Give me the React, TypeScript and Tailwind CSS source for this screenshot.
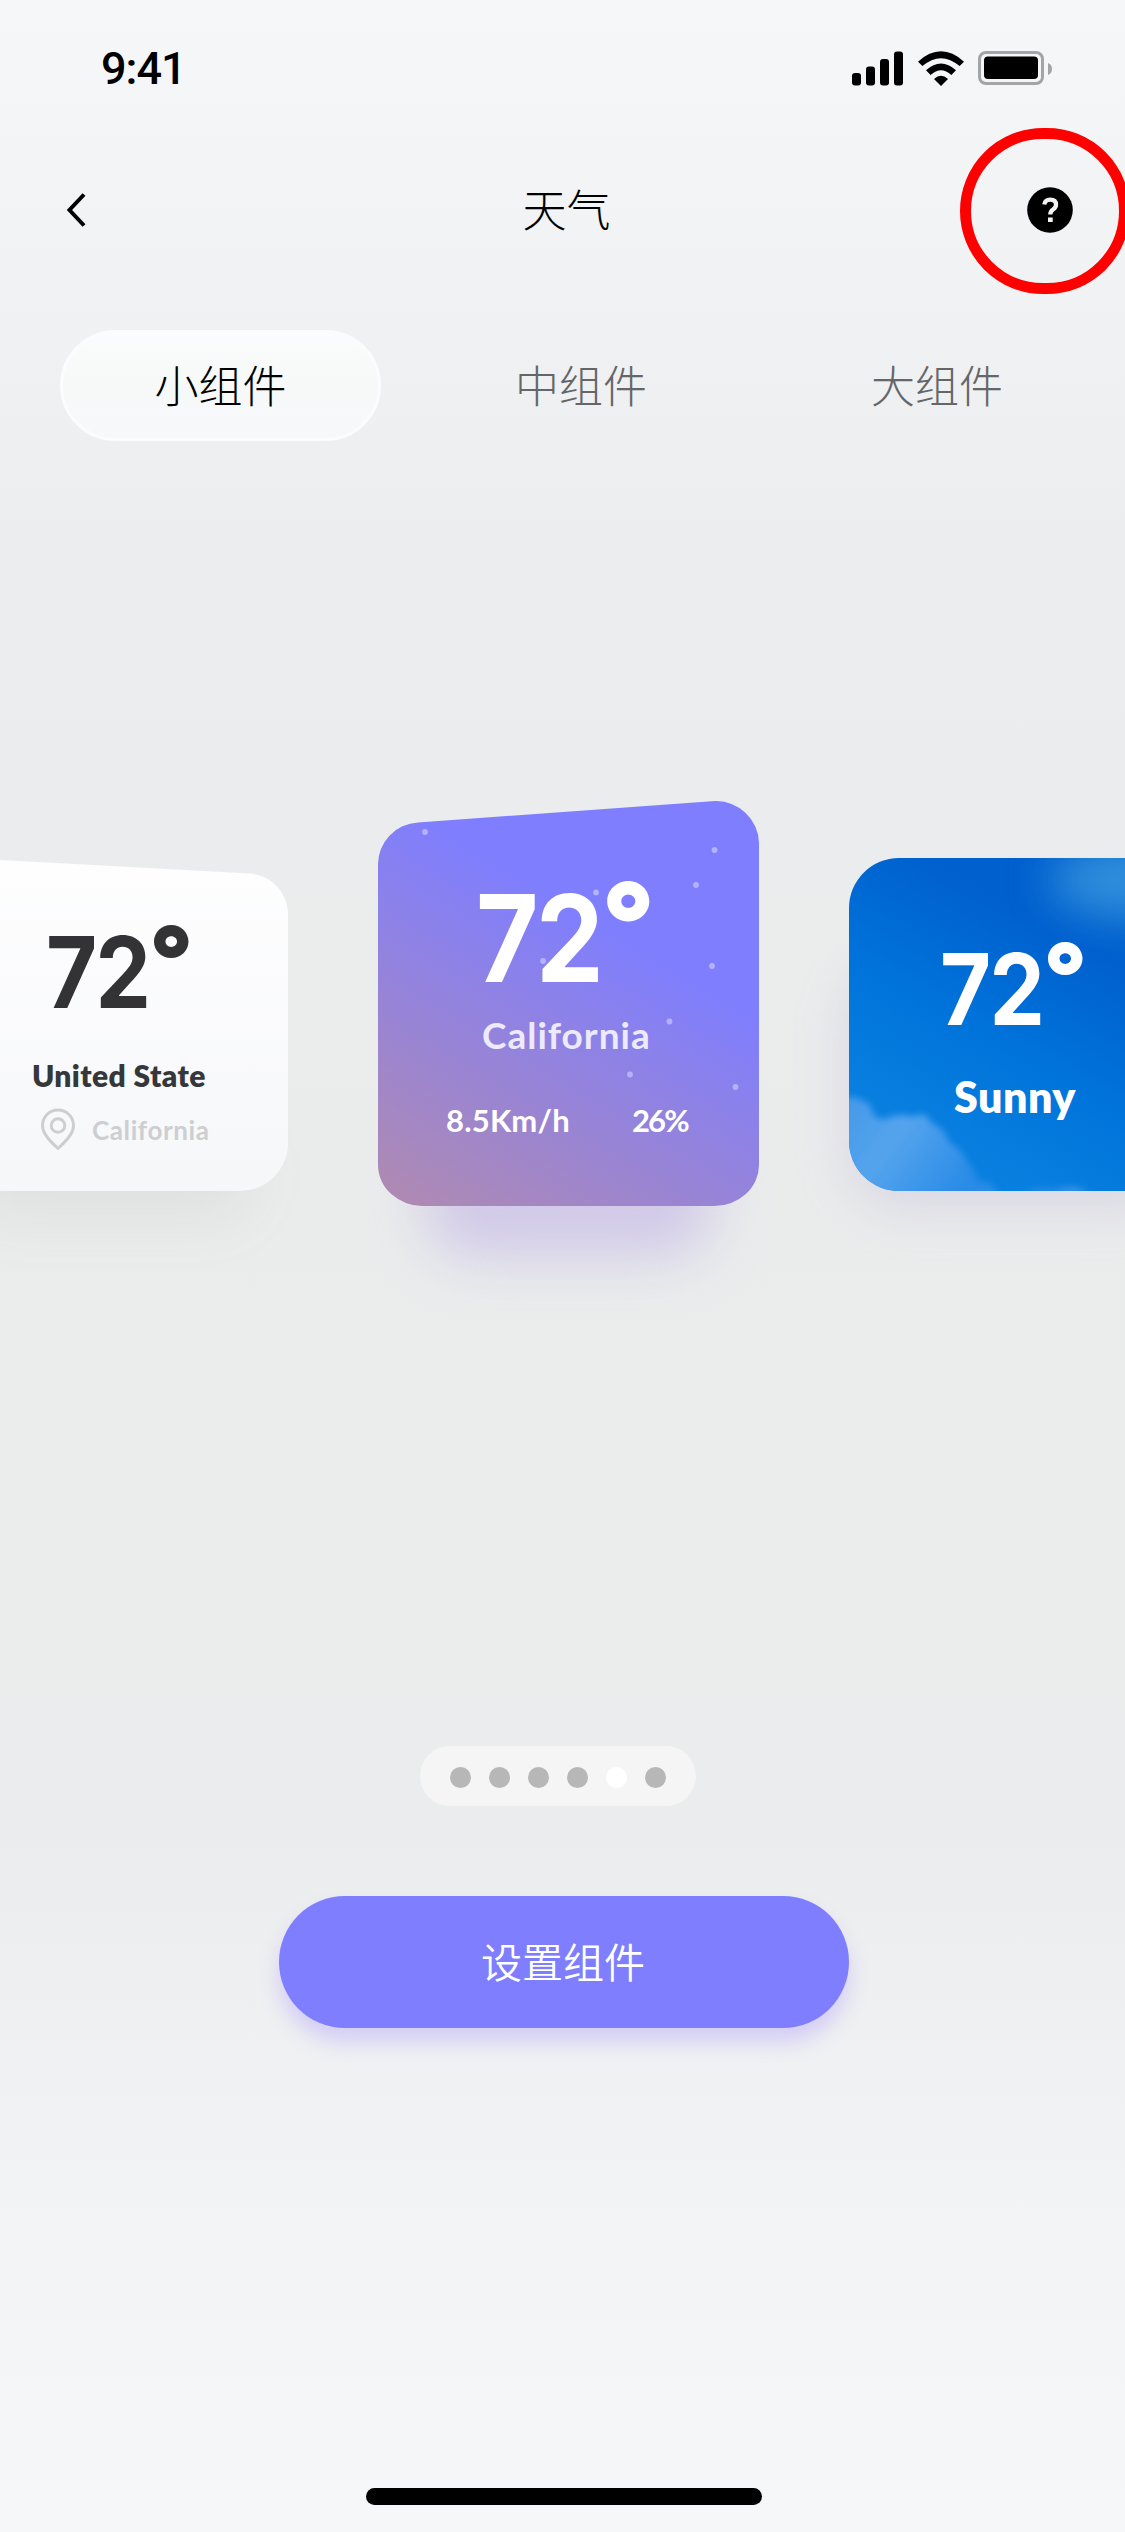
import React from "react";

const CJK = "font-['Noto_Sans_CJK_SC',sans-serif] font-light";

function StatusBar() {
  return (
    <div className="flex h-[137px] shrink-0 items-center justify-between pl-[101px] pr-[72px]">
      <span className="font-['Roboto',sans-serif] text-[45px] font-medium leading-none tracking-[-1px] text-black">
        9:41
      </span>
      <svg width="202" height="36" viewBox="0 0 202 36" className="block">
        <rect x="1" y="22" width="9" height="12.5" rx="3" />
        <rect x="15" y="15.500" width="9" height="19" rx="3" />
        <rect x="29" y="8" width="9" height="26.500" rx="3" />
        <rect x="43" y="0.500" width="9" height="34" rx="3" />
        <path d="M67 10.700Q90 -10 113 10.700L108.600 15.100Q90 -.8 71.400 15.100Z" />
        <path d="M75 19.200Q90 5.700 105 19.200L100.400 24Q90 14.600 79.600 24Z" />
        <path d="M83 28Q90 21.600 97 28L90 35Z" />
        <rect x="128.500" y="1.500" width="63" height="31" rx="6.500" fill="none" stroke="#a3a4a6" strokeWidth="3" />
        <rect x="133" y="5.500" width="54" height="22.500" rx="4" />
        <path d="M197 12Q201 13.500 201 18T197 24Z" fill="#a3a4a6" />
      </svg>
    </div>
  );
}

function Header() {
  return (
    <header className="relative flex h-[146px] shrink-0 items-center justify-between pl-[64px] pr-[52px]">
      <svg width="46" height="34" viewBox="0 0 46 34" fill="none" stroke="#000" strokeWidth="4">
        <path d="M20 1.500L5.500 17L20 32.500" />
      </svg>
      <h1 className={`${CJK} mb-[5px] mr-[4px] text-[44px] leading-none text-black`}>天气</h1>
      <svg width="46" height="46" viewBox="0 0 46 46">
        <circle cx="23" cy="23" r="22.800" />
        <path d="M17.300 17.500Q18 12.700 23.200 12.700Q29 12.700 29 17.700Q29 20.500 26 22.500Q23.300 24.300 23.300 27.500" fill="none" stroke="#f2f3f5" strokeWidth="4.300" />
        <rect x="21" y="30.500" width="4.700" height="4.500" fill="#f2f3f5" />
      </svg>
      <div className="absolute left-[960px] top-[-9px] h-[166px] w-[170px] rounded-full border-[11px] border-[#ff0000]" />
    </header>
  );
}

function Tabs() {
  return (
    <nav className={`${CJK} mt-[47px] flex h-[111px] shrink-0 items-center gap-[36px] pl-[60px] text-[44px] leading-none`}>
      <div className="flex h-[111px] w-[321px] items-center justify-center rounded-full border-[3px] border-[#fbfcfd] bg-gradient-to-b from-[#fbfcfd] via-[#f6f9f8] to-[#f7f8fb] pb-[4px] text-black">
        小组件
      </div>
      <div className="flex w-[328px] justify-center pb-[4px] text-[#656668]">中组件</div>
      <div className="flex w-[312px] justify-center pb-[4px] text-[#656668]">大组件</div>
    </nav>
  );
}

type TemperatureProps = { className: string; large?: boolean };

function Temperature({ className, large }: TemperatureProps) {
  return (
    <div className={`flex origin-left scale-x-[0.89] items-start font-['Inter',sans-serif] font-bold ${className}`}>
      <span className={large ? "text-[121px] leading-[88px] tracking-[-3px]" : "text-[99px] leading-[72px] tracking-[-2px]"}>72</span>
      <span className={large ? "-mt-[17px] origin-left scale-x-[1.16] text-[112px] font-black leading-[90px]" : "-mt-[14px] origin-left scale-x-[1.16] text-[92px] font-black leading-[74px]"}>°</span>
    </div>
  );
}

function WhiteCard() {
  return (
    <article className="relative mt-[57px] h-[333px] w-[336px] shrink-0">
      <div className="absolute bottom-[-28px] left-[20px] right-[34px] h-[90px] rounded-[50px] bg-[#85868c]/10 blur-[26px]" />
      <svg className="absolute inset-0" width="336" height="333" viewBox="0 0 336 333">
        <defs>
          <linearGradient id="white" x1="0" y1="0" x2="0" y2="1">
            <stop offset="0" stopColor="#fefeff" />
            <stop offset="1" stopColor="#f6f7f9" />
          </linearGradient>
        </defs>
        <path d="M48 2L298 15.500A41 41 0 0 1 336 58V285A48 48 0 0 1 288 333H0V0Z" fill="url(#white)" />
      </svg>
      <div className="relative flex flex-col">
        <Temperature className="ml-[94px] mt-[78px] h-[72px] text-[#333335]" />
        <div className="ml-[80px] mt-[52px] font-['Lato',sans-serif] text-[30px] font-extrabold leading-[30px] tracking-[0.4px] text-[#36373a]">
          United State
        </div>
        <div className="ml-[88px] mt-[18px] flex items-center">
          <svg width="36" height="43" viewBox="0 0 36 43" fill="none" stroke="#cdced0" strokeWidth="3">
            <path d="M18 40.500C11 34 2.500 26 2.500 17.500a15.500 15.500 0 0 1 31 0C33.500 26 25 34 18 40.500Z" strokeLinejoin="round" />
            <circle cx="18" cy="17.500" r="6.800" />
          </svg>
          <span className="ml-[16px] font-['Lato',sans-serif] text-[26px] font-bold leading-none tracking-[0.6px] text-[#cdced0]">California</span>
        </div>
      </div>
    </article>
  );
}

const STARS = [
  [47, 31], [336.5, 49], [318, 84], [218, 91.5], [165, 160],
  [334, 165], [291.5, 220.5], [252, 273.5], [357.5, 286],
];

function PurpleCard() {
  return (
    <article className="relative h-[405px] w-[381px] shrink-0">
      <div className="absolute bottom-[-50px] left-[46px] right-[46px] h-[110px] rounded-[50px] bg-[#9a80e0]/32 blur-[28px]" />
      <svg className="absolute inset-0" width="381" height="405" viewBox="0 0 381 405">
        <defs>
          <linearGradient id="purple" gradientUnits="userSpaceOnUse" x1="30" y1="420" x2="215" y2="110">
            <stop offset="0" stopColor="#b08ab0" />
            <stop offset="1" stopColor="#7e7eff" />
          </linearGradient>
        </defs>
        <path d="M40 21.500L337 0A43 43 0 0 1 381 42V364A45 41 0 0 1 336 405H46A45 41 0 0 1 0 364V64A42 42 0 0 1 40 21.500Z" fill="url(#purple)" />
        {STARS.map(([x, y]) => (
          <circle key={x} cx={x} cy={y} r="2.900" fill="#b4b2fb" />
        ))}
      </svg>
      <div className="relative flex flex-col text-white">
        <Temperature large className="ml-[98px] mt-[93px] h-[88px]" />
        <div className="ml-[104px] mt-[34px] font-['Lato',sans-serif] text-[37px] font-bold leading-[37px] tracking-[1px] text-[#eceafc]">
          California
        </div>
        <div className="ml-[68px] mt-[49px] flex font-['Lato',sans-serif] text-[31px] font-bold leading-[36px]">
          <span className="w-[186px] tracking-[0.2px]">8.5Km/h</span>
          <span className="tracking-[-1.9px]">26%</span>
        </div>
      </div>
    </article>
  );
}

function SkyCard() {
  return (
    <article className="relative mt-[57px] h-[333px] w-[336px] shrink-0">
      <div className="absolute bottom-[-20px] left-[-4px] right-0 h-[250px] rounded-[60px] bg-[#a08cc8]/20 blur-[24px]" />
      <svg className="absolute inset-0" width="336" height="333" viewBox="0 0 336 333">
        <defs>
          <linearGradient id="sky" gradientUnits="userSpaceOnUse" x1="215" y1="75" x2="95" y2="290">
            <stop offset="0" stopColor="#0060ce" />
            <stop offset=".5" stopColor="#0073da" />
            <stop offset="1" stopColor="#0980e0" />
          </linearGradient>
          <linearGradient id="cloud" gradientUnits="userSpaceOnUse" x1="0" y1="250" x2="110" y2="333">
            <stop offset="0" stopColor="#4f9dea" />
            <stop offset=".4" stopColor="#5ea8ef" />
            <stop offset="1" stopColor="#2f8de7" />
          </linearGradient>
          <clipPath id="skyClip"><rect width="336" height="333" rx="50" /></clipPath>
          <filter id="soft" filterUnits="userSpaceOnUse" x="0" y="-150" width="600" height="500"><feGaussianBlur stdDeviation="22" /></filter>
          <filter id="edge" filterUnits="userSpaceOnUse" x="-50" y="150" width="400" height="260"><feGaussianBlur stdDeviation="3.500" /></filter>
        </defs>
        <g clipPath="url(#skyClip)">
          <rect width="336" height="333" fill="url(#sky)" />
          <ellipse cx="290" cy="22" rx="90" ry="38" fill="#3e9bdf" opacity=".8" filter="url(#soft)" />
          <path d="M-10 240Q10 236 22 249Q24 262 36 261Q52 254 64 259Q78 252 82 265Q96 270 100 284Q114 292 118 304Q128 313 128 324Q142 320 152 340H-10Z" fill="url(#cloud)" opacity=".9" filter="url(#edge)" />
          <path d="M175 335Q190 330 205 333Q225 326 240 335Z" fill="#4f9fe8" filter="url(#edge)" />
        </g>
      </svg>
      <div className="relative flex flex-col text-white">
        <Temperature className="ml-[91px] mt-[95px] h-[73px]" />
        <div className="ml-[105px] mt-[49px] font-['Lato',sans-serif] text-[43px] font-extrabold leading-[43px] tracking-[0.5px]">
          Sunny
        </div>
      </div>
    </article>
  );
}

export default function App() {
  return (
    <main className="flex h-[2532px] w-[1125px] flex-col overflow-hidden bg-[linear-gradient(180deg,#f6f7f9_0%,#f2f3f5_9%,#ebedee_22%,#eaecec_45%,#ebeced_72%,#f2f3f5_86%,#f6f7f9_100%)]">
      <StatusBar />
      <Header />
      <Tabs />
      <section className="-ml-[48px] mt-[360px] flex h-[405px] shrink-0 items-start gap-[90px]">
        <WhiteCard />
        <PurpleCard />
        <SkyCard />
      </section>
      <div className="ml-[420px] mt-[540px] flex h-[60px] w-[276px] shrink-0 items-center justify-center gap-[18px] rounded-full bg-[#f5f5f6] pt-[3px]">
        {[0, 1, 2, 3, 4, 5].map((i) => (
          <span key={i} className={`h-[21px] w-[21px] rounded-full ${i === 4 ? "bg-white" : "bg-[#b7b7b7]"}`} />
        ))}
      </div>
      <button className="ml-[279px] mt-[90px] flex h-[132px] w-[570px] shrink-0 items-center justify-center rounded-full bg-[#7e7eff] pb-[4px] pr-[2px] font-['Noto_Sans_CJK_SC',sans-serif] text-[41px] font-[350] leading-none text-white shadow-[0_14px_20px_rgba(150,125,255,0.3)]">
        设置组件
      </button>
      <div className="ml-[366px] mt-[460px] h-[17px] w-[396px] shrink-0 rounded-full bg-black" />
    </main>
  );
}
